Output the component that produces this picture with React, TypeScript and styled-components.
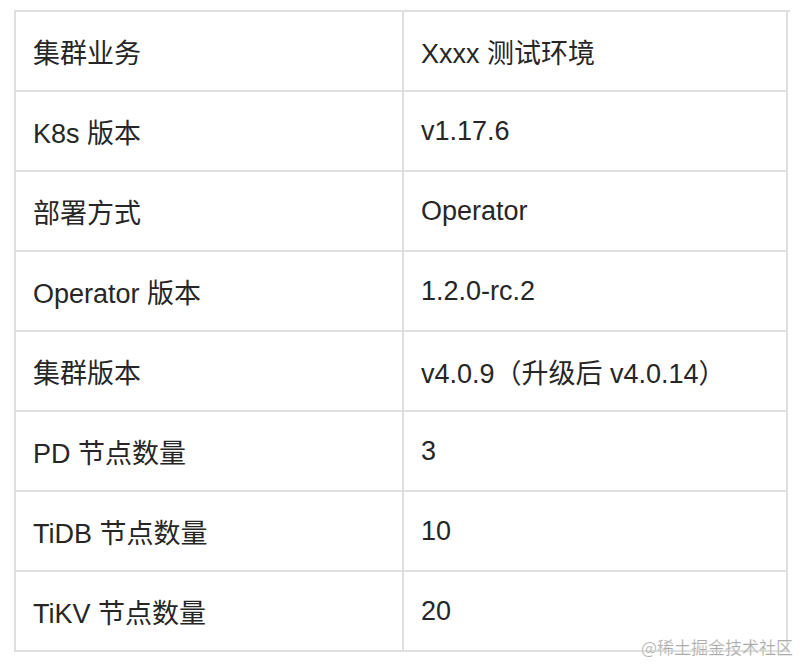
import React, { ReactElement } from 'react';
import styled, { createGlobalStyle } from 'styled-components';

interface Row {
  label: string;
  value: string;
}

const rows: Row[] = [
  { label: '集群业务', value: 'Xxxx 测试环境' },
  { label: 'K8s 版本', value: 'v1.17.6' },
  { label: '部署方式', value: 'Operator' },
  { label: 'Operator 版本', value: '1.2.0-rc.2' },
  { label: '集群版本', value: 'v4.0.9（升级后 v4.0.14）' },
  { label: 'PD 节点数量', value: '3' },
  { label: 'TiDB 节点数量', value: '10' },
  { label: 'TiKV 节点数量', value: '20' },
];

const GlobalStyle = createGlobalStyle`
  html, body {
    margin: 0;
    padding: 0;
    background: #ffffff;
  }
`;

const Page = styled.div`
  position: relative;
  width: 800px;
  height: 664px;
  padding: 10px 0 0 14px;
  box-sizing: border-box;
  background: #ffffff;
  font-family: 'Liberation Sans', 'Noto Sans CJK SC', sans-serif;
`;

const Table = styled.div`
  display: grid;
  grid-template-columns: 388px 384px;
  grid-auto-rows: 80px;
  width: 774px;
  border-left: 2px solid #dfdfdf;
  border-top: 2px solid #dfdfdf;
`;

const Cell = styled.div`
  display: flex;
  align-items: center;
  padding-left: 17px;
  border-right: 2px solid #dfdfdf;
  border-bottom: 2px solid #dfdfdf;
  font-size: 27px;
  color: #262626;
  white-space: nowrap;
`;

const Watermark = styled.div`
  position: absolute;
  right: 7px;
  bottom: 5px;
  font-family: 'Noto Sans CJK SC', sans-serif;
  font-size: 17px;
  color: #acacac;
  -webkit-text-stroke: 0.2px #ffffff;
`;

export default function App(): ReactElement {
  return (
    <>
      <GlobalStyle />
      <Page>
        <Table>
          {rows.map((row) => (
            <React.Fragment key={row.label}>
              <Cell>{row.label}</Cell>
              <Cell>{row.value}</Cell>
            </React.Fragment>
          ))}
        </Table>
        <Watermark>@稀土掘金技术社区</Watermark>
      </Page>
    </>
  );
}
